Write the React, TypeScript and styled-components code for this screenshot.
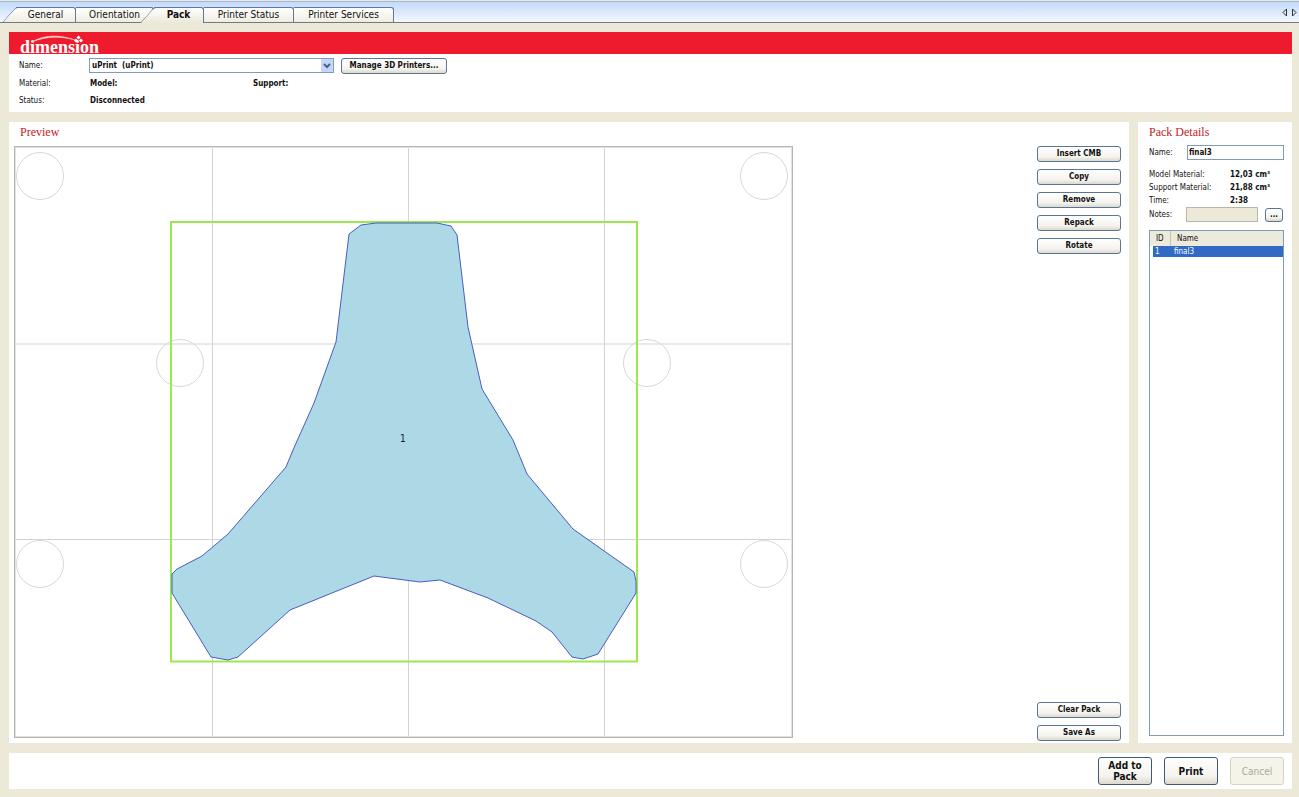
import React from "react";
import styled, { createGlobalStyle, css } from "styled-components";

const sans = `"DejaVu Sans Condensed", "DejaVu Sans", Tahoma, sans-serif`;
const serif = `"Liberation Serif", Georgia, serif`;

const GlobalStyle = createGlobalStyle`
  * { box-sizing: border-box; }
  body { margin: 0; background: #ece9d8; color: #111; font: 8px/12px ${sans}; }
  button, input, select { font: inherit; color: inherit; }
`;

const Page = styled.div`
  min-height: 100vh;
  display: flex;
  flex-direction: column;
`;

const TabStrip = styled.nav`
  height: 23px;
  display: flex;
  align-items: flex-end;
  padding-left: 16px;
  border-top: 1px solid #e4e8e8;
  border-bottom: 1px solid #77797c;
  background: linear-gradient(#a9b9cc 0 1px, #c3d9fb 1px, #f4f8ff);
`;

const Tab = styled.button<{ $width: number; $slanted?: boolean; $active?: boolean }>`
  position: relative;
  width: ${(p) => p.$width}px;
  height: 15px;
  padding: 0;
  border: 1px solid #5f789f;
  border-width: 1px 1px 0 0;
  border-radius: 0 3px 0 0;
  background: linear-gradient(#ffffff, #efede2);
  font-size: 10px;
  line-height: 12px;
  white-space: nowrap;
  ${(p) =>
    p.$active &&
    css`
      height: 16px;
      margin-bottom: -1px;
      padding-bottom: 2px;
      font-weight: bold;
      background: linear-gradient(#ffffff, #ece9d8);
    `}
  ${(p) =>
    p.$slanted &&
    css`
      &::before {
        content: "";
        position: absolute;
        inset: -1px auto 0 -7px;
        width: 14px;
        border: 1px solid #5f789f;
        border-width: 1px 0 0 1px;
        border-radius: 3px 0 0 0;
        background: inherit;
        transform: skewX(-42deg);
      }
    `}
`;

const TabLabel = styled.span`
  position: relative;
`;

const Scroller = styled.div`
  display: flex;
  gap: 5px;
  margin: 0 2px 5px auto;
`;

const Body = styled.div`
  flex: 1;
  display: flex;
  flex-direction: column;
  gap: 10px;
  padding: 9px 7px 8px 9px;
`;

const Panel = styled.section`
  background: #fff;
`;

const Banner = styled.header`
  height: 22px;
  padding-left: 10px;
  background: #ee1b2e;
`;

const PrinterForm = styled.div`
  display: grid;
  grid-template-columns: 71px 163px 82px auto;
  grid-template-rows: 23px 14px 20px;
  align-items: center;
  justify-content: start;
  padding: 0 0 1px 10px;
`;

const Strong = styled.span`
  font-weight: bold;
`;

const PickerCell = styled.div`
  grid-column: 2 / 5;
  display: flex;
  align-items: center;
  gap: 7px;
  margin-left: -1px;
`;

const SelectBox = styled.div`
  position: relative;
  display: flex;
`;

const Select = styled.select`
  appearance: none;
  width: 245px;
  height: 15px;
  padding: 0 2px;
  border: 1px solid #7f9db9;
  border-radius: 0;
  background: #fff;
  font-weight: bold;
`;

const SelectArrow = styled.svg`
  position: absolute;
  top: 1px;
  right: 1px;
  pointer-events: none;
`;

const Button = styled.button<{ $width?: number }>`
  width: ${(p) => p.$width ?? 84}px;
  height: 16px;
  padding: 0;
  border: 1px solid #5b7596;
  border-radius: 3px;
  background: linear-gradient(#ffffff, #f4f3ee 70%, #dcd8cc);
  font-weight: bold;
  white-space: nowrap;
`;

const Main = styled.main`
  flex: 1;
  display: flex;
  gap: 9px;
`;

const PreviewPanel = styled(Panel)`
  flex: 1;
  min-width: 0;
  display: flex;
  flex-direction: column;
  padding: 2px 8px 2px 5px;
`;

const Title = styled.h2<{ $indent?: number }>`
  margin: 0 0 0 ${(p) => p.$indent ?? 0}px;
  color: #c22222;
  font: 12px/16px ${serif};
`;

const PreviewRow = styled.div`
  flex: 1;
  display: flex;
  align-items: flex-start;
  justify-content: space-between;
  gap: 16px;
  padding-top: 6px;
`;

const Plate = styled.svg`
  flex: 0 1 779px;
  min-width: 0;
  height: auto;
`;

const Actions = styled.div`
  align-self: stretch;
  display: flex;
  flex-direction: column;
  gap: 7px;
`;

const Spacer = styled.div`
  flex: 1;
`;

const DetailsPanel = styled(Panel)`
  width: 154px;
  display: flex;
  flex-direction: column;
  padding: 2px 8px 7px 11px;
`;

const NameRow = styled.div`
  display: grid;
  grid-template-columns: 38px 1fr;
  align-items: center;
  margin: 5px 0 8px;
`;

const TextBox = styled.input`
  min-width: 0;
  width: 100%;
  height: 15px;
  padding: 0 1px;
  border: 1px solid #7f9db9;
  background: #fff;
  font-weight: bold;
  &:disabled {
    border-color: #b5b8a8;
    background: #ece9d8;
  }
`;

const Facts = styled.dl`
  display: grid;
  grid-template-columns: 81px 1fr;
  line-height: 13px;
  margin: 0;
  dt, dd { margin: 0; }
  dd { font-weight: bold; white-space: nowrap; }
`;

const NotesRow = styled.div`
  display: grid;
  grid-template-columns: 37px 72px 18px;
  align-items: center;
  button { margin-left: 7px; height: 14px; }
`;

const ListBox = styled.div`
  flex: 1;
  margin-top: 8px;
  border: 1px solid #7f9db9;
`;

const Table = styled.table`
  width: 100%;
  table-layout: fixed;
  border-collapse: separate;
  border-spacing: 0;
  th, td { padding: 0 0 0 6px; font-weight: normal; text-align: left; }
  th { height: 15px; background: #ebeadb; }
  th:first-child { width: 20px; }
  th + th { border-left: 1px solid #c7c5b2; }
  td { height: 11px; padding-left: 4px; line-height: 10px; background: #316ac5; color: #fff; }
  td:first-child { padding-left: 2px; border-left: 3px solid #fff; }
`;

const Footer = styled.footer`
  display: flex;
  justify-content: flex-end;
  gap: 12px;
  padding: 4px 8px;
  background: #fff;
`;

const BigButton = styled(Button)`
  width: 54px;
  height: 28px;
  font-size: 10px;
  line-height: 11px;
  white-space: normal;
  border-color: #3f5878;
  &:disabled {
    border-color: #d6d3c2;
    background: #f5f4ea;
    color: #aca899;
    font-weight: normal;
  }
`;

const TABS = [
  { label: "General", width: 60, slanted: true },
  { label: "Orientation", width: 78 },
  { label: "Pack", width: 50, slanted: true, active: true },
  { label: "Printer Status", width: 90 },
  { label: "Printer Services", width: 100 },
];

const HOLES = [
  [26, 30], [750, 30], [166, 217], [633, 217], [26, 418], [750, 418],
];

const OUTLINE =
  "335,88 347,79 362,77 423,77 437,80 443,89 454,181 468,243 499,294 513,328 559,383 620,426 622,435 622,447 " +
  "584,508 569,513 558,511 538,486 522,475 474,452 426,434 406,436 360,430 276,464 224,511 214,514 197,511 " +
  "158,447 158,428 163,423 188,410 214,388 272,321 279,304 300,257 322,196";

function Logo() {
  return (
    <svg width="90" height="22" viewBox="0 0 90 22" overflow="visible" role="img" aria-label="dimension">
      <text x="1" y="21" fill="#fff" fontFamily="'Liberation Serif', serif" fontWeight="bold" fontSize="18">dimension</text>
      <path d="M13 10 C24 3 40 2 56 8 C42 4 27 4 13 10Z" fill="#fde0d8" stroke="#fbc8c0" strokeWidth="0.6" />
      <g fill="#fff">
        <path d="M59.500 3.500l2 2-2 2-2-2z" />
        <path d="M57 6.500l2 2-2 2-2-2z" />
        <path d="M62 6.500l2 2-2 2-2-2z" />
      </g>
    </svg>
  );
}

export default function App() {
  return (
    <Page>
      <GlobalStyle />
      <TabStrip role="tablist">
        {TABS.map((t) => (
          <Tab key={t.label} role="tab" aria-selected={!!t.active} $width={t.width} $slanted={t.slanted} $active={t.active}>
            <TabLabel>{t.label}</TabLabel>
          </Tab>
        ))}
        <Scroller>
          <svg width="5" height="9" viewBox="0 0 5 9" fill="none" stroke="#333"><path d="M4.500 1v7L1 4.500z" /></svg>
          <svg width="5" height="9" viewBox="0 0 5 9" fill="none" stroke="#333"><path d="M.5 1v7L4 4.500z" /></svg>
        </Scroller>
      </TabStrip>
      <Body>
        <Panel>
          <Banner><Logo /></Banner>
          <PrinterForm>
            <label htmlFor="printer">Name:</label>
            <PickerCell>
              <SelectBox>
                <Select id="printer"><option>{"uPrint\u00a0 (uPrint)"}</option></Select>
                <SelectArrow width="12" height="13" viewBox="0 0 12 13">
                  <rect width="12" height="13" rx="1" fill="#c3d5fb" />
                  <path d="M3 5l3 3 3-3" fill="none" stroke="#4d6185" strokeWidth="2" />
                </SelectArrow>
              </SelectBox>
              <Button $width={106}>Manage 3D Printers...</Button>
            </PickerCell>
            <span>Material:</span>
            <Strong>Model:</Strong>
            <Strong>Support:</Strong>
            <span />
            <span>Status:</span>
            <Strong>Disconnected</Strong>
          </PrinterForm>
        </Panel>
        <Main>
          <PreviewPanel>
            <Title $indent={6}>Preview</Title>
            <PreviewRow>
              <Plate viewBox="0 0 779 592" role="img" aria-label="Pack preview">
                <rect x="1.500" y="1.500" width="776" height="589" fill="#fff" stroke="#e2e2e2" />
                <rect x="0.500" y="0.500" width="778" height="591" fill="none" stroke="#b4b4b4" />
                <path d="M198.500 2v588M394.500 2v588M590.500 2v588M2 198h775M2 393.500h775" stroke="#d3d3d3" />
                <g fill="none" stroke="#d8d8d8">
                  {HOLES.map(([x, y]) => <circle key={`${x}-${y}`} cx={x} cy={y} r="23.500" />)}
                </g>
                <rect x="157" y="76" width="466" height="439.500" fill="none" stroke="#9be84f" strokeWidth="2" />
                <polygon points={OUTLINE} fill="#add8e6" stroke="#4a5cc0" />
                <text x="386" y="296" fontFamily="'DejaVu Sans Condensed', sans-serif" fontSize="10" fill="#123">1</text>
              </Plate>
              <Actions>
                <Button>Insert CMB</Button>
                <Button>Copy</Button>
                <Button>Remove</Button>
                <Button>Repack</Button>
                <Button>Rotate</Button>
                <Spacer />
                <Button>Clear Pack</Button>
                <Button>Save As</Button>
              </Actions>
            </PreviewRow>
          </PreviewPanel>
          <DetailsPanel>
            <Title>Pack Details</Title>
            <NameRow>
              <label htmlFor="pack-name">Name:</label>
              <TextBox id="pack-name" defaultValue="final3" />
            </NameRow>
            <Facts>
              <dt>Model Material:</dt><dd>12,03 cm³</dd>
              <dt>Support Material:</dt><dd>21,88 cm³</dd>
              <dt>Time:</dt><dd>2:38</dd>
            </Facts>
            <NotesRow>
              <label htmlFor="notes">Notes:</label>
              <TextBox id="notes" disabled />
              <Button $width={18} aria-label="Edit notes">...</Button>
            </NotesRow>
            <ListBox>
              <Table>
                <thead><tr><th>ID</th><th>Name</th></tr></thead>
                <tbody><tr><td>1</td><td>final3</td></tr></tbody>
              </Table>
            </ListBox>
          </DetailsPanel>
        </Main>
        <Footer>
          <BigButton>Add to Pack</BigButton>
          <BigButton>Print</BigButton>
          <BigButton disabled>Cancel</BigButton>
        </Footer>
      </Body>
    </Page>
  );
}
